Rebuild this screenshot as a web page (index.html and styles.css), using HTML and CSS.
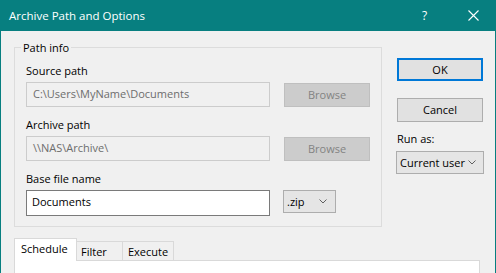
FILE: index.html
```html
<!DOCTYPE html>
<html lang="en">
<head>
<meta charset="UTF-8" />
<title>Archive Path and Options</title>
<link rel="stylesheet" href="styles.css">
</head>
<body>
<div class="window">
    <div class="titlebar">
        <span class="title">Archive Path and Options</span>
        <span class="help">?</span>
        <span class="close">
            <svg width="11" height="11" viewBox="0 0 11 11"><path d="M0.5 0.5 L10.5 10.5 M10.5 0.5 L0.5 10.5" stroke="#fff" stroke-width="1.1" fill="none"/></svg>
        </span>
    </div>

    <div class="main">
        <fieldset class="group">
            <legend>Path info</legend>
            <div class="field">
                <div class="label">Source path</div>
                <div class="row">
                    <div class="input disabled">C:\Users\MyName\Documents</div>
                    <div class="btn disabled">Browse</div>
                </div>
            </div>
            <div class="field">
                <div class="label">Archive path</div>
                <div class="row">
                    <div class="input disabled">\\NAS\Archive\</div>
                    <div class="btn disabled">Browse</div>
                </div>
            </div>
            <div class="field">
                <div class="label">Base file name</div>
                <div class="row">
                    <div class="input edit">Documents</div>
                    <div class="combo ext">
                        <span class="combo-text">.zip</span>
                        <svg class="chev" width="8" height="5" viewBox="0 0 8 5"><path d="M0.5 0.5 L4 4 L7.5 0.5" stroke="#606060" fill="none"/></svg>
                    </div>
                </div>
            </div>
        </fieldset>

        <div class="side">
            <div class="btn default">OK</div>
            <div class="btn cancel">Cancel</div>
            <div class="label runas">Run as:</div>
            <div class="combo user">
                <span class="combo-text">Current user</span>
                <svg class="chev" width="8" height="5" viewBox="0 0 8 5"><path d="M0.5 0.5 L4 4 L7.5 0.5" stroke="#606060" fill="none"/></svg>
            </div>
        </div>
    </div>

    <div class="tabs">
        <div class="tab active">Schedule</div>
        <div class="tab filter">Filter</div>
        <div class="tab execute">Execute</div>
    </div>
    <div class="panel"></div>
</div>
</body>
</html>
```

FILE: styles.css
```css
body {
    margin: 0;
    width: 496px;
    height: 273px;
    overflow: hidden;
    font-family: 'Open Sans', 'Noto Sans', sans-serif;
    font-size: 11px;
    color: #000;
}
.window {
    box-sizing: border-box;
    width: 496px;
    height: 273px;
    background: #f0f0f0;
    border-left: 1px solid #077f80;
    border-right: 1px solid #077f80;
    display: flex;
    flex-direction: column;
}
.titlebar {
    height: 31px;
    flex: none;
    background: #077f80;
    color: #fff;
    display: flex;
    align-items: center;
    padding-left: 8px;
}
.title {
    flex: 1;
    font-size: 11.5px;
}
.help {
    width: 14px;
    font-size: 12px;
    margin-right: 32px;
}
.close {
    width: 11px;
    height: 11px;
    margin-right: 16px;
    display: flex;
}
.main {
    display: flex;
    padding-left: 13px;
    margin-top: 9px;
}
.group {
    margin: 0;
    width: 368px;
    height: 187px;
    box-sizing: border-box;
    border: 1px solid #dcdcdc;
    padding: 8px 10px 0 11px;
}
.group legend {
    padding: 0 2px;
    margin-left: -5px;
    line-height: 15px;
}
.field {
    margin-bottom: 10px;
}
.label {
    line-height: 16px;
    margin-bottom: 3px;
}
.row {
    display: flex;
    gap: 14px;
}
.input {
    box-sizing: border-box;
    width: 244px;
    height: 25px;
    border: 1px solid #cccccc;
    padding-left: 6px;
    line-height: 22px;
}
.input.disabled {
    color: #6d6d6d;
}
.input.edit {
    height: 26px;
    background: #fff;
    border-color: #7a7a7a;
    padding-left: 5px;
}
.btn {
    box-sizing: border-box;
    width: 86px;
    height: 24px;
    border: 1px solid #adadad;
    background: #e1e1e1;
    text-align: center;
    line-height: 21px;
}
.btn.disabled {
    margin-top: 1px;
    background: #cccccc;
    border-color: #bfbfbf;
    color: #838383;
}
.combo {
    box-sizing: border-box;
    height: 23px;
    border: 1px solid #adadad;
    background: #e5e5e5;
    display: flex;
    align-items: center;
    padding-left: 3px;
    overflow: hidden;
}
.combo-text {
    flex: 1;
    white-space: nowrap;
    overflow: hidden;
}
.chev {
    flex: none;
    margin: 0 8px 0 6px;
}
.ext {
    width: 53px;
    margin-left: -1px;
}
.user .chev {
    margin: 0 7px 0 2px;
}
.side {
    margin-left: 14px;
    padding-top: 18px;
    display: flex;
    flex-direction: column;
}
.btn.default {
    height: 23px;
    border: 2px solid #0078d7;
    line-height: 19px;
    margin-left: 1px;
}
.btn.cancel {
    margin-top: 17px;
    margin-left: 1px;
}
.runas {
    margin-top: 9px;
    margin-left: 1px;
}
.user {
    width: 88px;
    margin-top: 1px;
}
.tabs {
    display: flex;
    align-items: flex-end;
    padding-left: 13px;
    margin-top: 11px;
    height: 22px;
}
.tab {
    box-sizing: border-box;
    height: 19px;
    padding-left: 4px;
    border: 1px solid #d9d9d9;
    border-bottom: none;
    border-left: none;
    line-height: 19px;
}
.tab.active {
    width: 63px;
    height: 23px;
    margin-bottom: -1px;
    background: #fff;
    border-left: 1px solid #d9d9d9;
    line-height: 19px;
    padding-left: 6px;
    position: relative;
}
.tab.filter {
    width: 46px;
}
.tab.execute {
    width: 51px;
    padding-left: 5px;
}
.panel {
    flex: 1;
    margin-left: 13px;
    width: 466px;
    box-sizing: border-box;
    background: #fff;
    border: 1px solid #d9d9d9;
    border-bottom: none;
}
```
